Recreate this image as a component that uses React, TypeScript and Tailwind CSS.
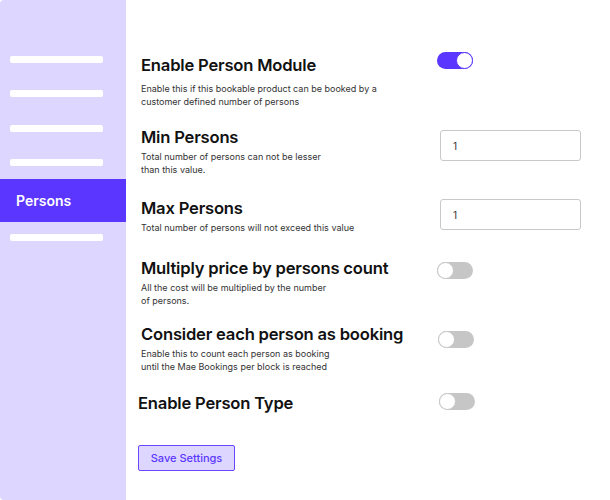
import { useState } from 'react';

function Toggle({ on, onClick }: { on: boolean; onClick: () => void }) {
  return (
    <button
      onClick={onClick}
      className={`relative flex h-[17px] w-[36px] items-center rounded-full ${on ? 'bg-[#5b36ff]' : 'bg-[#c6c6c6]'}`}
    >
      <span
        className={`absolute top-0 h-[17px] w-[17px] rounded-full border bg-white ${
          on ? 'right-0 border-[#5b36ff]' : 'left-0 border-[#c6c6c6]'
        }`}
      />
    </button>
  );
}

const navBars = ['mt-[56px]', 'mt-[27px]', 'mt-[28px]', 'mt-[27px]'];

export default function App() {
  const [module, setModule] = useState(true);
  const [multiply, setMultiply] = useState(false);
  const [each, setEach] = useState(false);
  const [types, setTypes] = useState(false);

  const title = 'text-[16.6px] leading-[24px] font-semibold text-[#111] tracking-[-0.2px]';
  const desc = 'text-[9px] leading-[13px] text-[#333]';

  return (
    <div className="flex h-[500px] w-[610px] bg-white" style={{ fontFamily: 'Inter, "Noto Sans", sans-serif' }}>
      {/* Sidebar */}
      <aside className="flex h-full w-[126px] shrink-0 flex-col rounded-l-[4px] bg-[#ddd6fe]">
        {navBars.map((m, i) => (
          <div key={i} className={`${m} ml-[10px] h-[7px] w-[93px] rounded-[2px] bg-white`} />
        ))}
        <div className="mt-[13px] flex h-[43px] items-center bg-[#5b36ff] pl-[16px] text-[14px] font-semibold text-white">
          Persons
        </div>
        <div className="ml-[10px] mt-[12px] h-[7px] w-[93px] rounded-[2px] bg-white" />
      </aside>

      {/* Settings */}
      <main className="flex flex-1 flex-col pl-[15px]">
        <div className="mt-[53px] flex items-start">
          <div className="w-[296px]">
            <h2 className={title}>Enable Person Module</h2>
            <p className={`${desc} mt-[5px]`}>
              Enable this if this bookable product can be booked by a
              <br />
              customer defined number of persons
            </p>
          </div>
          <div className="-mt-[1px]">
            <Toggle on={module} onClick={() => setModule(!module)} />
          </div>
        </div>

        <div className="mt-[17px] flex items-start">
          <div className="w-[299px]">
            <h2 className={title}>Min Persons</h2>
            <p className={`${desc} mt-[1px]`}>
              Total number of persons can not be lesser
              <br />
              than this value.
            </p>
          </div>
          <input
            defaultValue="1"
            className="mt-[5px] h-[31px] w-[141px] rounded-[3px] border border-[#c8c8c8] px-[12px] text-[10px] text-[#333] outline-none"
          />
        </div>

        <div className="mt-[20px] flex items-start">
          <div className="w-[299px]">
            <h2 className={title}>Max Persons</h2>
            <p className={`${desc} mt-[1px]`}>Total number of persons will not exceed this value</p>
          </div>
          <input
            defaultValue="1"
            className="mt-[3px] h-[31px] w-[141px] rounded-[3px] border border-[#c8c8c8] px-[12px] text-[10px] text-[#333] outline-none"
          />
        </div>

        <div className="mt-[22px] flex items-start">
          <div className="w-[296px]">
            <h2 className={title}>Multiply price by persons count</h2>
            <p className={`${desc} mt-[1px]`}>
              All the cost will be multiplied by the number
              <br />
              of persons.
            </p>
          </div>
          <div className="mt-[6px]">
            <Toggle on={multiply} onClick={() => setMultiply(!multiply)} />
          </div>
        </div>

        <div className="mt-[15px] flex items-start">
          <div className="w-[297px]">
            <h2 className={title}>Consider each person as booking</h2>
            <p className={`${desc} mt-[1px]`}>
              Enable this to count each person as booking
              <br />
              until the Mae Bookings per block is reached
            </p>
          </div>
          <div className="mt-[9px]">
            <Toggle on={each} onClick={() => setEach(!each)} />
          </div>
        </div>

        <div className="-ml-[3px] mt-[18px] flex items-start">
          <div className="w-[301px]">
            <h2 className={title}>Enable Person Type</h2>
          </div>
          <div className="mt-[2px]">
            <Toggle on={types} onClick={() => setTypes(!types)} />
          </div>
        </div>

        <div className="-ml-[3px] mt-[29px]">
          <button className="h-[26px] w-[97px] rounded-[2px] border border-[#6b46ff] bg-[#ddd6fe] text-[11px] font-medium text-[#5b36ff]">
            Save Settings
          </button>
        </div>
      </main>
    </div>
  );
}
